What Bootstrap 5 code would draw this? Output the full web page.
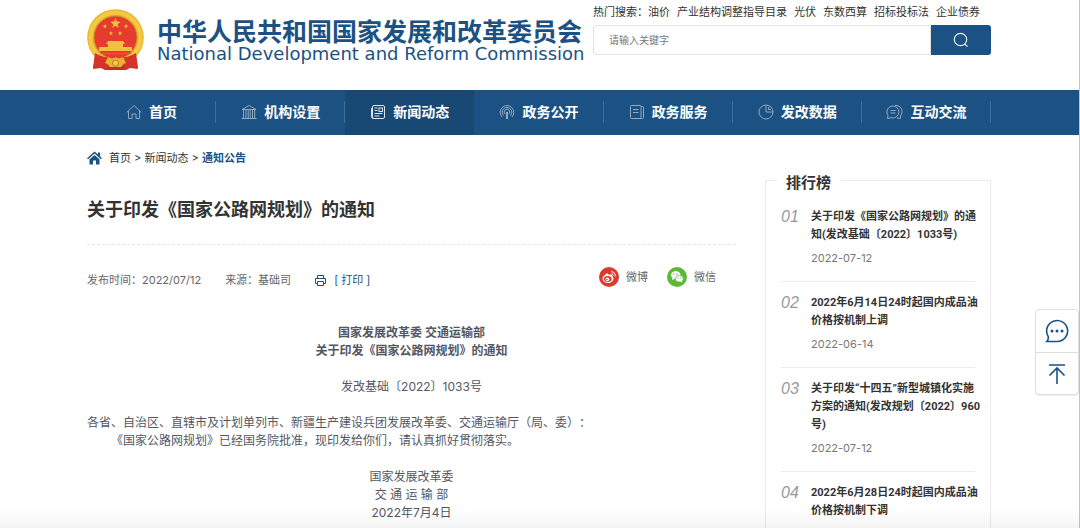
<!DOCTYPE html>
<html lang="zh-CN">
<head>
<meta charset="utf-8">
<meta name="viewport" content="width=device-width, initial-scale=1">
<title>关于印发《国家公路网规划》的通知</title>
<link href="https://cdn.jsdelivr.net/npm/bootstrap@5.3.0/dist/css/bootstrap.min.css" rel="stylesheet">
<style>
:root { --brand: #1c5283; --brand-dark: #184975; --rule: #ebebeb; }
body { font-family: Inter, "Noto Sans CJK SC", sans-serif; font-size: 11px; line-height: 18px; color: #333; background: #fff; border-right: 1px solid #c4c4c4; text-spacing-trim: space-all; }
a { color: inherit; text-decoration: none; }
svg { flex: none; }
.wrap { width: 100%; max-width: 904px; margin-left: auto; margin-right: auto; }
.masthead { height: 90px; }
.masthead, .mainnav, .page { padding-right: 1px; }
.brand { color: var(--brand); gap: 13px; padding-top: 9px; }
.brand-zh { font-family: "Noto Sans CJK SC", sans-serif; font-size: 25px; line-height: 26px; font-weight: 700; padding-top: 8px; }
.brand-en { font-family: "DejaVu Sans", sans-serif; font-size: 18px; line-height: 18px; margin-top: 2px; }
.search-area { width: 398px; padding-top: 3px; }
.hot { gap: 7px; }
.search-field { height: 30px; font-size: 10px; border: 1px solid #e2e2e2; border-radius: 3px 0 0 3px; padding: 0 15px; }
.search-field::placeholder { color: #777; }
.search-btn { width: 60px; height: 30px; background: var(--brand); border-radius: 0 3px 3px 0; }
.mainnav { background: var(--brand); }
.mainnav ul { height: 45px; }
.mainnav li { flex: 1 1 0; }
.mainnav a { height: 45px; gap: 7px; padding-bottom: 1px; color: #fff; font-size: 14px; font-weight: 700; position: relative; }
.mainnav a::after { content: ""; position: absolute; right: 0; top: 11px; height: 22px; border-right: 1px solid #3d6f9d; }
.mainnav a.active { background: var(--brand-dark); }
.mainnav a.active::after { display: none; }
.mainnav svg { opacity: .5; }
.mainnav a.active svg { opacity: .85; }
.article { width: 649px; padding-top: 14px; }
.crumbs { gap: 7px; }
.crumbs b, .print { color: var(--brand); }
.headline { font-size: 18px; line-height: 26px; font-weight: 700; margin: 30px 0 0; padding-bottom: 21px; border-bottom: 1px dashed #e6e6e6; }
.meta { color: #666; margin-top: 22px; padding-right: 20px; }
.meta-items { gap: 24px; }
.print { font-size: 11px; line-height: 18px; }
.share { gap: 19px; margin-bottom: 2px; }
.share a { gap: 7px; }
.content { font-size: 12px; color: #545762; margin-top: 35px; }
.content p { margin: 0 0 18px; }
.indent { text-indent: 2em; }
.ranking { width: 226px; margin-top: 45px; padding: 0 15px; border: solid var(--rule); border-width: 1px 1px 0; }
.ranking h2 { font-size: 15px; line-height: 20px; font-weight: 700; width: 64px; margin: -8px 0 0 -4px; padding-left: 9px; background: #fff; }
.ranking ol { margin: 3px 0 0; }
.ranking li { padding: 11px 0 14px; border-bottom: 1px solid var(--rule); }
.ranking li:last-child { border-bottom: 0; padding-bottom: 0; }
.rank-no { width: 30px; flex: none; font: italic 16px/20px "Liberation Sans", sans-serif; color: #999; }
.rank-title { font-family: Roboto, "Noto Sans CJK SC", sans-serif; font-weight: 700; white-space: nowrap; padding-top: 1px; }
.ranking time { color: #777; margin-top: 5px; }
.tools { right: 1px; top: 309px; width: 44px; border: 1px solid #dedede; border-radius: 4px; background: #fff; color: var(--brand); box-shadow: 0 1px 1px #0001; }
.tools button { width: 42px; height: 42px; color: inherit; background: none; }
.tools button + button { border-top: 1px solid #dedede; }
.fade-edge { height: 20px; background: linear-gradient(#0000, #0000000b); pointer-events: none; }
</style>
</head>
<body class="d-flex flex-column min-vh-100">
<header class="masthead">
  <div class="wrap d-flex justify-content-between">
    <a href="#" class="brand d-flex align-items-start">
      <svg width="57" height="62" viewBox="0 0 57 62" aria-label="国徽">
        <path d="M9 42 L6 60 L14 59 L18 61 L39 61 L43 59 L51 60 L48 42Z" fill="#c9302a"/>
        <circle cx="28.500" cy="28.500" r="28.300" fill="#e9b52d"/>
        <circle cx="28.500" cy="28.500" r="25" fill="none" stroke="#f3c842" stroke-width="4"/>
        <circle cx="28.500" cy="28.500" r="21.500" fill="#e63b2e" stroke="#c98c22"/>
        <g fill="#eec23e">
          <path d="M28.500 9l1.400 3.600 3.800.2-3 2.400 1 3.700-3.200-2.100-3.200 2.100 1-3.700-3-2.400 3.800-.2z"/>
          <path id="star" d="M18 15l.6 1.500 1.600.1-1.200 1 .4 1.600-1.400-.9-1.400.9.4-1.600-1.200-1 1.600-.1z"/>
          <use href="#star" x="21"/><use href="#star" x="6" y="7"/><use href="#star" x="15" y="7"/>
          <path d="M21 32h15l2 3h-2v3h9v4H12v-4h9v-3h-2z"/>
          <path d="M13 44h31v1H13z" fill="#bd7a20"/>
        </g>
        <path d="M8 44q8 5 14 4l-2 12-7-2-7 1zM49 44q-8 5-14 4l2 12 7-2 7 1z" fill="#d8332b"/>
        <path d="M21 48q4 3 7.500 0q4 3 7.500 0l3 6q-4 1-5 5H23q-1-4-5-5z" fill="#e8b330"/>
        <path d="M19 58h19l-3 3H22z" fill="#c92b25"/><circle cx="28.500" cy="54" r="3" fill="#f5d055" stroke="#bd7a20"/>
      </svg>
      <span class="d-block text-nowrap">
        <span class="brand-zh d-block">中华人民共和国国家发展和改革委员会</span>
        <span class="brand-en d-block">National Development and Reform Commission</span>
      </span>
    </a>
    <div class="search-area">
      <div class="hot d-flex text-nowrap"><span>热门搜索：<a href="#">油价</a></span><a href="#">产业结构调整指导目录</a><a href="#">光伏</a><a href="#">东数西算</a><a href="#">招标投标法</a><a href="#">企业债券</a></div>
      <form class="d-flex mt-1" role="search">
        <input class="search-field flex-grow-1" type="text" placeholder="请输入关键字" aria-label="请输入关键字">
        <button class="search-btn btn p-0 border-0 d-flex align-items-center justify-content-center" type="button" aria-label="搜索">
          <svg width="16" height="16" fill="none" stroke="#e4edf5" stroke-width="1.200"><circle cx="7.500" cy="7.500" r="6.200"/><path d="M11.500 12l3 2.500"/></svg>
        </button>
      </form>
    </div>
  </div>
</header>
<nav class="mainnav">
  <ul class="wrap list-unstyled d-flex mb-0 text-nowrap">
    <li><a href="#" class="d-flex align-items-center justify-content-center"><svg width="16" height="16" fill="none" stroke="#fff"><path d="M.7 8.500L8 1.500l7.300 7M2.500 7v7.500h3.500V10h4v4.500h3.500V7"/></svg>首页</a></li>
    <li><a href="#" class="d-flex align-items-center justify-content-center"><svg width="16" height="16" fill="none" stroke="#fff"><path d="M1 5.500L8 1.500l7 4zM.5 14.500h15M2.500 6v8M5 6v8M7.200 6v8M9.200 6v8M11.500 6v8M13.700 6v8"/></svg>机构设置</a></li>
    <li><a href="#" class="active d-flex align-items-center justify-content-center"><svg width="16" height="16" fill="none" stroke="#fff"><rect x="2.500" y="1.500" width="12" height="13" rx="1.500"/><path d="M1.500 4v8.500q0 2 2 2M4.500 4h3M4.500 6.500h3M4.500 9.500h8M4.500 12h5"/><rect x="9" y="4" width="3.500" height="3.500"/></svg>新闻动态</a></li>
    <li><a href="#" class="d-flex align-items-center justify-content-center"><svg width="16" height="16" fill="none" stroke="#fff"><path d="M3 13A6.800 6.800 0 1 1 13 13M4.500 11.500a4.800 4.800 0 1 1 7 0M6 10a2.800 2.800 0 1 1 4 0M7.500 15V8M8.500 15V8"/></svg>政务公开</a></li>
    <li><a href="#" class="d-flex align-items-center justify-content-center"><svg width="16" height="16" fill="none" stroke="#fff"><rect x="1.500" y="1.500" width="10.500" height="13" rx="1"/><path d="M12 2.500h1.500q1 0 1 1v10q0 1-1 1H11M4 5.500h5.500M4 8.500h5.500"/></svg>政务服务</a></li>
    <li><a href="#" class="d-flex align-items-center justify-content-center"><svg width="16" height="16" fill="none" stroke="#fff"><circle cx="8" cy="8" r="7"/><path d="M8 1v7h7M10.500 3v2.500H13"/></svg>发改数据</a></li>
    <li><a href="#" class="d-flex align-items-center justify-content-center"><svg width="17" height="16" fill="none" stroke="#fff"><path d="M2 11.500A6 6 0 1 1 5 13.700L1.500 14.500zM9 1.500q7 0 7 6.200 0 2.500-1.500 4.300v2.500L11 14M4.500 6.500h5M4.500 9h5"/></svg>互动交流</a></li>
  </ul>
</nav>
<div class="page flex-grow-1 d-flex">
<main class="wrap d-flex justify-content-between">
  <article class="article">
    <div class="crumbs d-flex align-items-center">
      <svg width="15" height="14" fill="#1c5283"><path d="M7.500.5L11 3.500V1.500h2v3.800l2 1.900-1 1L7.500 2.500 1 8.200l-1-1z"/><path d="M2.500 8.200l5-4.300 5 4.300V13.500H9V9.500H6v4H2.500z"/></svg>
      <div><a href="#">首页</a> &gt; <a href="#">新闻动态</a> &gt; <b>通知公告</b></div>
    </div>
    <h1 class="headline">关于印发《国家公路网规划》的通知</h1>
    <div class="meta d-flex justify-content-between align-items-end">
      <div class="meta-items d-flex align-items-center">
        <span>发布时间：2022/07/12</span><span>来源：基础司</span>
        <button type="button" class="print btn p-0 border-0 d-flex align-items-center gap-2"><svg width="11" height="12" fill="none" stroke="#1c5283"><path d="M2.500 4V1.500h6V4M2.500 9.500h-2v-5h10v5h-2"/><path d="M2.500 7.500h6v4h-6z"/></svg><span>[ 打印 ]</span></button>
      </div>
      <div class="share d-flex align-items-center">
        <a href="#" class="d-flex align-items-center"><svg width="20" height="20"><circle cx="10" cy="10" r="10" fill="#db3a30"/><ellipse cx="9" cy="11.800" rx="5.500" ry="4.200" fill="#fff"/><path d="M5 8.500L8.500 6l1 2 3-.5.5 2z" fill="#fff"/><ellipse cx="8.700" cy="12" rx="4" ry="2.900" fill="#db3a30"/><circle cx="8.300" cy="12.300" r="1.900" fill="#fff"/><circle cx="7.900" cy="12.500" r=".8" fill="#db3a30"/><path d="M12.200 4.800a3.700 3.700 0 0 1 4 4.700M12.500 6.800q1.700-.1 1.700 2" fill="none" stroke="#fff"/></svg>微博</a>
        <a href="#" class="d-flex align-items-center"><svg width="20" height="20"><circle cx="10" cy="10" r="10" fill="#5cb937"/><path d="M5 13l.5-2.200A4.800 3.900 0 1 1 8 11.800z" fill="#fff"/><ellipse cx="12.300" cy="11.700" rx="4" ry="3.300" fill="#fff" stroke="#5cb937" stroke-width=".7"/><path d="M13 14.500l2.200 1-.3-2z" fill="#fff"/><g fill="#5cb937"><circle cx="6.700" cy="7" r=".7"/><circle cx="9.900" cy="7" r=".7"/><circle cx="11" cy="11" r=".6"/><circle cx="13.700" cy="11" r=".6"/></g></svg>微信</a>
      </div>
    </div>
    <div class="content">
      <p class="text-center fw-bold">国家发展改革委 交通运输部<br>关于印发《国家公路网规划》的通知</p>
      <p class="text-center">发改基础〔2022〕1033号</p>
      <p class="mb-0">各省、自治区、直辖市及计划单列市、新疆生产建设兵团发展改革委、交通运输厅（局、委）：</p>
      <p class="indent">《国家公路网规划》已经国务院批准，现印发给你们，请认真抓好贯彻落实。</p>
      <p class="text-center mb-0">国家发展改革委<br>交 通 运 输 部<br>2022年7月4日</p>
    </div>
  </article>
  <aside class="ranking">
    <h2>排行榜</h2>
    <ol class="list-unstyled">
      <li class="d-flex"><span class="rank-no">01</span><div><a href="#" class="rank-title d-block">关于印发《国家公路网规划》的通<br>知(发改基础〔2022〕1033号)</a><time class="d-block">2022-07-12</time></div></li>
      <li class="d-flex"><span class="rank-no">02</span><div><a href="#" class="rank-title d-block">2022年6月14日24时起国内成品油<br>价格按机制上调</a><time class="d-block">2022-06-14</time></div></li>
      <li class="d-flex"><span class="rank-no">03</span><div><a href="#" class="rank-title d-block">关于印发“十四五”新型城镇化实施<br>方案的通知(发改规划〔2022〕960<br>号)</a><time class="d-block">2022-07-12</time></div></li>
      <li class="d-flex"><span class="rank-no">04</span><div><a href="#" class="rank-title d-block">2022年6月28日24时起国内成品油<br>价格按机制下调</a></div></li>
    </ol>
  </aside>
</main>
</div>
<div class="tools position-fixed">
  <button type="button" class="d-flex align-items-center justify-content-center border-0 p-0" aria-label="咨询"><svg width="24" height="24" fill="none" stroke="currentColor" stroke-width="1.600"><path d="M3.200 17.500A10.500 10.500 0 1 1 12 22.500H1.800Q3.800 20.500 3.200 17.500z"/><g fill="currentColor" stroke="none"><circle cx="7" cy="12" r="1.500"/><circle cx="12" cy="12" r="1.500"/><circle cx="17" cy="12" r="1.500"/></g></svg></button>
  <button type="button" class="d-flex align-items-center justify-content-center border-bottom-0 border-start-0 border-end-0 p-0" aria-label="返回顶部"><svg width="18" height="22" fill="none" stroke="currentColor" stroke-width="1.600"><path d="M1 2h16M9 21V5M1.500 12.500L9 5l7.500 7.500"/></svg></button>
</div>
<div class="fade-edge position-fixed bottom-0 start-0 end-0"></div>
<script src="https://cdn.jsdelivr.net/npm/bootstrap@5.3.0/dist/js/bootstrap.bundle.min.js"></script>
</body>
</html>
